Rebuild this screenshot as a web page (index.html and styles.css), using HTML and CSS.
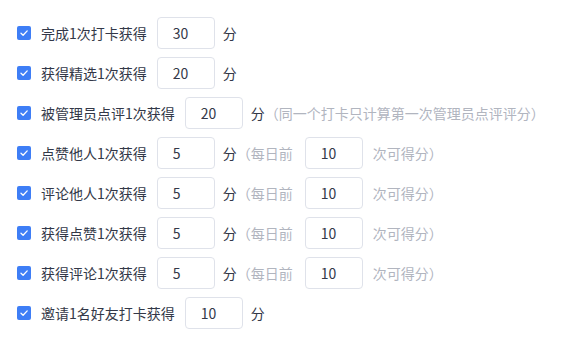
FILE: index.html
```html
<!DOCTYPE html>
<html lang="zh-CN">
<head>
    <meta charset="UTF-8">
    <meta name="viewport" content="width=device-width, initial-scale=1.0">
    <title>积分规则</title>
    <link rel="stylesheet" href="styles.css">
</head>
<body>
    <!-- 积分规则列表 -->
    <div class="rules">
        <div class="rule">
            <span class="check"><svg viewBox="0 0 14 14"><path d="M4 7.2 L6.1 9.2 L10.2 4.9"/></svg></span>
            <span class="label">完成1次打卡获得</span>
            <input class="num" type="text" value="30">
            <span class="unit">分</span>
        </div>
        <div class="rule">
            <span class="check"><svg viewBox="0 0 14 14"><path d="M4 7.2 L6.1 9.2 L10.2 4.9"/></svg></span>
            <span class="label">获得精选1次获得</span>
            <input class="num" type="text" value="20">
            <span class="unit">分</span>
        </div>
        <div class="rule">
            <span class="check"><svg viewBox="0 0 14 14"><path d="M4 7.2 L6.1 9.2 L10.2 4.9"/></svg></span>
            <span class="label">被管理员点评1次获得</span>
            <input class="num" type="text" value="20">
            <span class="unit">分</span>
            <span class="tip">（同一个打卡只计算第一次管理员点评评分）</span>
        </div>
        <div class="rule">
            <span class="check"><svg viewBox="0 0 14 14"><path d="M4 7.2 L6.1 9.2 L10.2 4.9"/></svg></span>
            <span class="label">点赞他人1次获得</span>
            <input class="num" type="text" value="5">
            <span class="unit">分</span>
            <span class="tip">（每日前</span>
            <input class="num limit" type="text" value="10">
            <span class="tip">次可得分）</span>
        </div>
        <div class="rule">
            <span class="check"><svg viewBox="0 0 14 14"><path d="M4 7.2 L6.1 9.2 L10.2 4.9"/></svg></span>
            <span class="label">评论他人1次获得</span>
            <input class="num" type="text" value="5">
            <span class="unit">分</span>
            <span class="tip">（每日前</span>
            <input class="num limit" type="text" value="10">
            <span class="tip">次可得分）</span>
        </div>
        <div class="rule">
            <span class="check"><svg viewBox="0 0 14 14"><path d="M4 7.2 L6.1 9.2 L10.2 4.9"/></svg></span>
            <span class="label">获得点赞1次获得</span>
            <input class="num" type="text" value="5">
            <span class="unit">分</span>
            <span class="tip">（每日前</span>
            <input class="num limit" type="text" value="10">
            <span class="tip">次可得分）</span>
        </div>
        <div class="rule">
            <span class="check"><svg viewBox="0 0 14 14"><path d="M4 7.2 L6.1 9.2 L10.2 4.9"/></svg></span>
            <span class="label">获得评论1次获得</span>
            <input class="num" type="text" value="5">
            <span class="unit">分</span>
            <span class="tip">（每日前</span>
            <input class="num limit" type="text" value="10">
            <span class="tip">次可得分）</span>
        </div>
        <div class="rule">
            <span class="check"><svg viewBox="0 0 14 14"><path d="M4 7.2 L6.1 9.2 L10.2 4.9"/></svg></span>
            <span class="label">邀请1名好友打卡获得</span>
            <input class="num" type="text" value="10">
            <span class="unit">分</span>
        </div>
    </div>
</body>
</html>
```

FILE: styles.css
```css
/* 页面基础 */
body {
    margin: 0;
    padding: 17px 0 0 17px;
    background-color: #fff;
    font-family: "Noto Sans CJK SC", "Microsoft YaHei", sans-serif;
    font-size: 14px;
    color: #333848;
}

/* 每一行规则 */
.rule {
    display: flex;
    align-items: center;
    height: 32px;
    margin-bottom: 8px;
    white-space: nowrap;
}

/* 复选框（已勾选） */
.check {
    width: 14px;
    height: 14px;
    border-radius: 2px;
    background-color: #3e7ef6;
    margin-right: 10px;
    flex-shrink: 0;
}

.check svg {
    display: block;
    width: 14px;
    height: 14px;
}

.check path {
    fill: none;
    stroke: #fff;
    stroke-width: 1.3;
    stroke-linecap: round;
    stroke-linejoin: round;
}

.label {
    margin-right: 10px;
}

/* 数字输入框 */
.num {
    width: 58px;
    height: 32px;
    box-sizing: border-box;
    padding: 0 15px;
    border: 1px solid #dfe2ea;
    border-radius: 4px;
    font-family: inherit;
    font-size: 14px;
    color: #333848;
    outline: none;
}

.unit {
    margin-left: 8px;
}

/* 灰色说明文字 */
.tip {
    color: #b1b5bf;
}

.limit {
    margin: 0 10px 0 12px;
}
```
